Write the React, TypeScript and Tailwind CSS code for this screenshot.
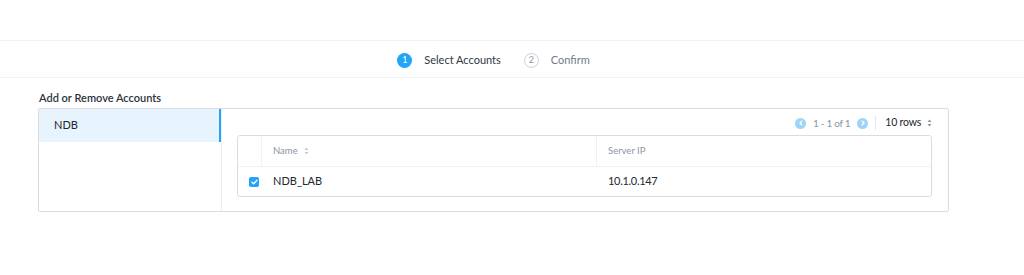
import React from "react";

function Chevron({ dir }: { dir: "left" | "right" }) {
  return (
    <span className="flex h-[11px] w-[11px] items-center justify-center rounded-full bg-[#9fd4f9]">
      <svg width="6" height="6" viewBox="0 0 6 6" fill="none">
        <path
          d={dir === "left" ? "M3.8 1.2L2 3l1.8 1.8" : "M2.2 1.2L4 3 2.2 4.8"}
          stroke="white"
          strokeWidth="1.3"
          strokeLinecap="round"
          strokeLinejoin="round"
        />
      </svg>
    </span>
  );
}

function SortIcon() {
  return (
    <svg width="5" height="8" viewBox="0 0 5 8" className="ml-[6px]">
      <path d="M2.5 0.5L4.5 3H0.5z" fill="currentColor" />
      <path d="M2.5 7.5L4.5 5H0.5z" fill="currentColor" />
    </svg>
  );
}

export default function App() {
  return (
    <div className="h-[275px] w-full bg-white font-['Lato','Liberation_Sans',sans-serif] text-[#22272e]">
      <div className="h-[40px]" />
      {/* stepper */}
      <div className="flex h-[38px] items-center justify-center border-y border-[#f0f2f4] pr-[37px] pt-[2px]">
        <div className="flex items-center">
          <span className="flex h-[15px] w-[15px] items-center justify-center rounded-full bg-[#22a5f7] text-[9px] text-white">
            1
          </span>
          <span className="ml-[12px] text-[11px] text-[#2f3843]">Select Accounts</span>
        </div>
        <div className="ml-[23px] flex items-center">
          <span className="flex h-[15px] w-[15px] items-center justify-center rounded-full border border-[#c8d0d8] text-[9px] text-[#8a96a3]">
            2
          </span>
          <span className="ml-[12px] text-[11px] text-[#6f7d8c]">Confirm</span>
        </div>
      </div>

      <div className="px-[38px] pt-[13px]">
        <div className="pl-[1px] text-[11px] font-semibold leading-[14px] text-[#2c333b]">
          Add or Remove Accounts
        </div>
        <div className="mt-[3px] flex h-[104px] w-[911px] rounded-[2px] border border-[#d9dde2]">
          {/* left list */}
          <div className="w-[183px] border-r border-[#eceff2]">
            <div className="flex h-[33px] items-center border-r-2 border-[#22a5f7] bg-[#e8f4fd] pl-[15px] text-[11px] text-[#22272e]">
              NDB
            </div>
          </div>
          {/* right panel */}
          <div className="flex-1 pl-[15px] pr-[15px]">
            <div className="flex h-[26px] items-center justify-end pr-[1px] pt-[2px]">
              <Chevron dir="left" />
              <span className="ml-[7px] text-[10px] tracking-[-0.3px] text-[#8a96a3]">1 - 1 of 1</span>
              <span className="ml-[7px]">
                <Chevron dir="right" />
              </span>
              <span className="ml-[7px] h-[14px] w-px bg-[#e3e7eb]" />
              <span className="ml-[9px] flex items-center text-[10.5px] tracking-[-0.2px] text-[#22272e]">
                10 rows
                <span className="text-[#8a96a3]">
                  <SortIcon />
                </span>
              </span>
            </div>
            <div className="w-[695px] rounded-[3px] border border-[#d9dde2]">
              <div className="flex h-[31px] border-b border-[#f0f2f4] text-[9.5px] text-[#8a96a3]">
                <div className="w-[24px] border-r border-[#f0f2f4]" />
                <div className="flex w-[335px] items-center border-r border-[#f0f2f4] pl-[11px]">
                  Name
                  <span className="text-[#c2cad3]">
                    <SortIcon />
                  </span>
                </div>
                <div className="flex items-center pl-[11px]">Server IP</div>
              </div>
              <div className="flex h-[29px] items-center text-[11px] text-[#22272e]">
                <div className="flex w-[24px] items-center pl-[11px]">
                  <span className="flex h-[10px] w-[10px] items-center justify-center rounded-[2px] bg-[#22a5f7]">
                    <svg width="7" height="6" viewBox="0 0 7 6" fill="none">
                      <path d="M1 3.2L2.7 4.8L6 1.2" stroke="white" strokeWidth="1.3" strokeLinecap="round" strokeLinejoin="round" />
                    </svg>
                  </span>
                </div>
                <div className="w-[335px] pl-[11px]">NDB_LAB</div>
                <div className="pl-[11px] tracking-[-0.3px]">10.1.0.147</div>
              </div>
            </div>
          </div>
        </div>
      </div>
    </div>
  );
}
